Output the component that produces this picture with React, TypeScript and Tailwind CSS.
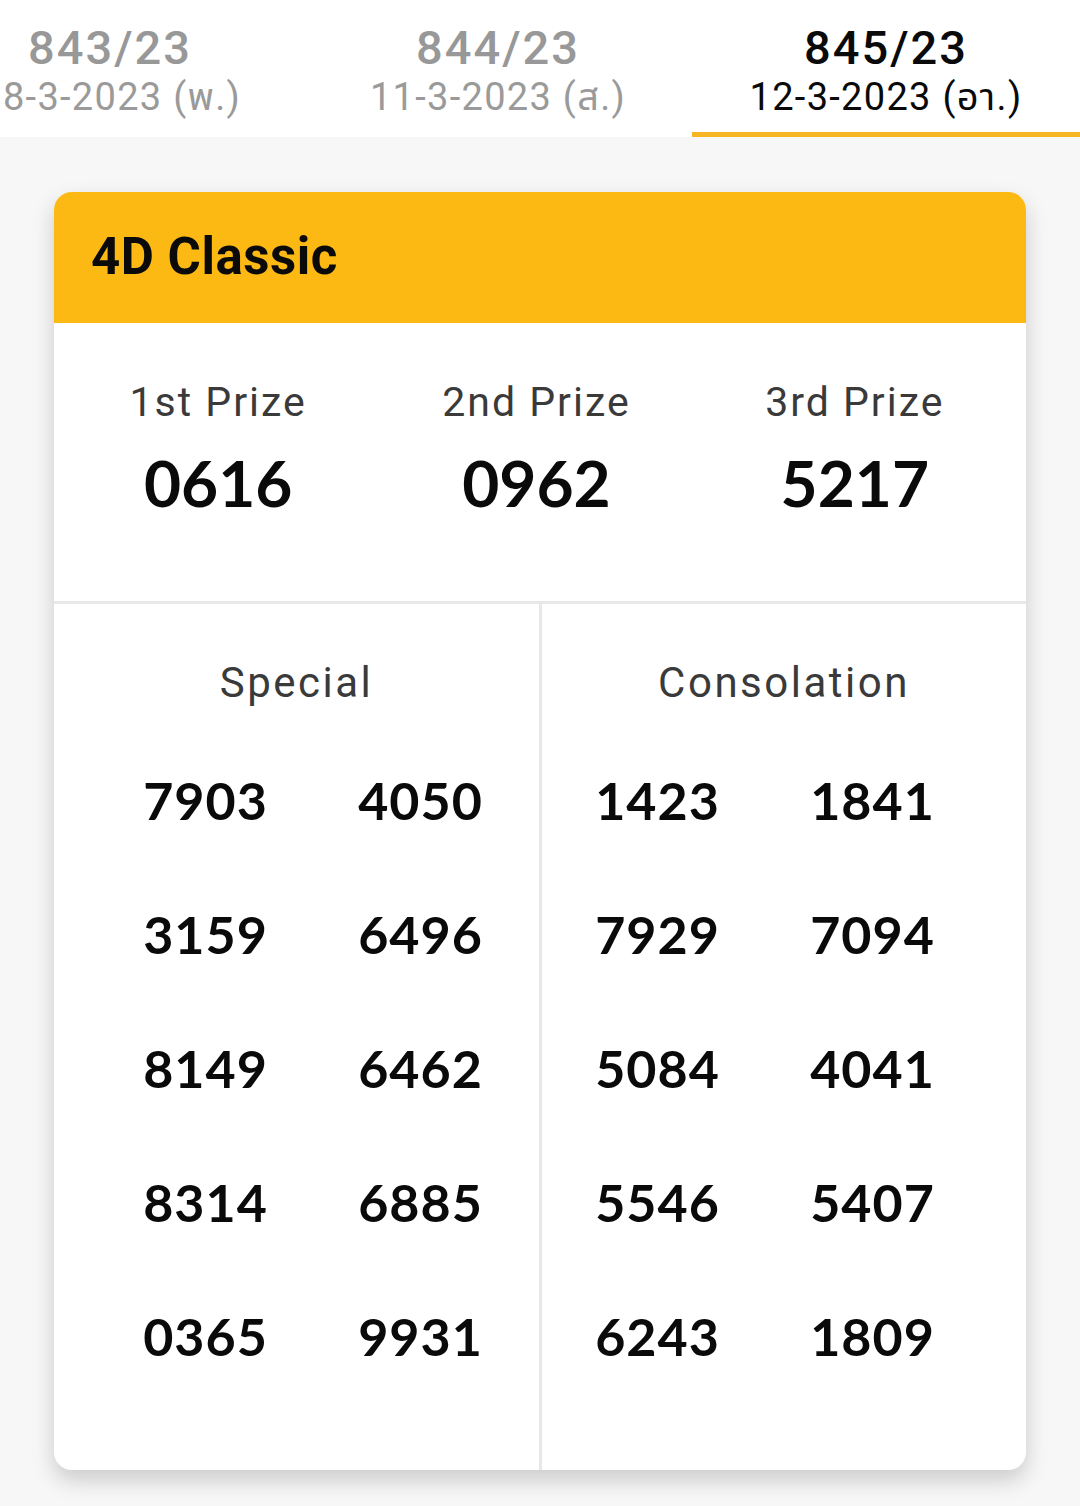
import React from "react";

const tabs = [
  { num: "843/23", date: "8-3-2023 (พ.)", active: false, datePad: "pl-[24px]" },
  { num: "844/23", date: "11-3-2023 (ส.)", active: false, datePad: "" },
  { num: "845/23", date: "12-3-2023 (อา.)", active: true, datePad: "" },
];

const prizes = [
  { label: "1st Prize", value: "0616" },
  { label: "2nd Prize", value: "0962" },
  { label: "3rd Prize", value: "5217" },
];

const special = ["7903", "4050", "3159", "6496", "8149", "6462", "8314", "6885", "0365", "9931"];
const consolation = ["1423", "1841", "7929", "7094", "5084", "4041", "5546", "5407", "6243", "1809"];

const labelFont = { fontFamily: "Roboto, 'Noto Sans', 'Noto Sans Thai', sans-serif" };
const numFont = { fontFamily: "Lato, Roboto, sans-serif" };

function NumGrid({ items, pad }: { items: string[]; pad: string }) {
  return (
    <div className={`grid grid-cols-[215px_215px] ${pad}`}>
      {items.map((n, i) => (
        <div
          key={i}
          className="h-[134px] flex items-center justify-center text-[52px] font-bold text-[#0a0a0a] tracking-[1px]"
          style={numFont}
        >
          {n}
        </div>
      ))}
    </div>
  );
}

export default function App() {
  return (
    <div className="w-[1080px] h-[1506px] bg-[#f7f7f7] overflow-hidden" style={labelFont}>
      <div className="h-[137px] bg-white overflow-hidden">
        <div className="flex ml-[-84px]">
          {tabs.map((t, i) => (
            <div
              key={i}
              className={`w-[388px] shrink-0 h-[137px] flex flex-col items-center pt-[21px] ${
                t.active ? "border-b-[5px] border-[#f6b623]" : ""
              }`}
            >
              <div
                className={`text-[47px] leading-[54px] font-medium tracking-[2px] ${
                  t.active ? "text-[#0a0a0a]" : "text-[#989898]"
                }`}
              >
                {t.num}
              </div>
              <div
                className={`text-[38px] leading-[44px] tracking-[1.3px] whitespace-nowrap ${t.datePad} ${
                  t.active ? "text-[#0a0a0a]" : "text-[#9a9a9a]"
                }`}
              >
                {t.date}
              </div>
            </div>
          ))}
        </div>
      </div>

      <div className="px-[54px] pt-[55px]">
        <div className="w-[972px] bg-white rounded-[18px] overflow-hidden shadow-[0_10px_22px_rgba(0,0,0,0.18)]">
          <div className="h-[131px] bg-[#fdb913] flex items-center pl-[37px]">
            <div className="text-[51px] font-bold text-[#0a0a0a] tracking-[0.5px]">4D Classic</div>
          </div>

          <div className="h-[278px] grid grid-cols-3 pt-[55px] pl-[5px] pr-[12px]">
            {prizes.map((p, i) => (
              <div key={i} className="flex flex-col items-center">
                <div className="text-[41px] leading-[48px] text-[#3a3a3a] tracking-[2px]">{p.label}</div>
                <div
                  className="mt-[17px] text-[64px] leading-[80px] font-bold text-[#0a0a0a] tracking-[0px]"
                  style={numFont}
                >
                  {p.value}
                </div>
              </div>
            ))}
          </div>

          <div className="h-[3px] bg-[#e8e8e8]" />

          <div className="flex">
            <div className="w-[488px] border-r-[3px] border-[#e8e8e8] pt-[55px] pb-[67px]">
              <div className="text-center text-[42px] leading-[48px] text-[#3a3a3a] tracking-[2.5px]">Special</div>
              <div className="mt-[26px]">
                <NumGrid items={special} pad="pl-[44px]" />
              </div>
            </div>
            <div className="flex-1 pt-[55px] pb-[67px]">
              <div className="text-center text-[42px] leading-[48px] text-[#3a3a3a] tracking-[2.5px]">Consolation</div>
              <div className="mt-[26px]">
                <NumGrid items={consolation} pad="pl-[8px]" />
              </div>
            </div>
          </div>
        </div>
      </div>
    </div>
  );
}
